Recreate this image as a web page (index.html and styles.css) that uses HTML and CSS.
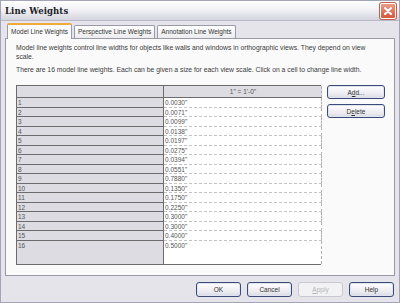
FILE: index.html
```html
<!DOCTYPE html>
<html lang="en">
<head>
    <meta charset="UTF-8">
    <title>Line Weights</title>
    <link rel="stylesheet" href="styles.css">
</head>
<body>
    <div class="window">
        <div class="titlebar">
            <span class="title">Line Weights</span>
            <span class="close">
                <svg width="14" height="14" viewBox="0 0 14 14">
                    <path d="M4 4 L10 10 M10 4 L4 10" stroke="#fff" stroke-width="2" stroke-linecap="round"/>
                </svg>
            </span>
        </div>
        <div class="content">
            <div class="tabs">
                <div class="tab active">Model Line Weights</div>
                <div class="tab">Perspective Line Weights</div>
                <div class="tab">Annotation Line Weights</div>
            </div>
            <div class="panel">
                <p class="info">Model line weights control line widths for objects like walls and windows in orthographic views. They depend on view scale.</p>
                <p class="info">There are 16 model line weights. Each can be given a size for each view scale. Click on a cell to change line width.</p>
                <div class="grid-area">
                    <div class="grid" id="grid">
                        <div class="cell head"></div>
                        <div class="cell head scale">1" = 1'-0"</div>
                    </div>
                    <div class="side-buttons">
                        <button class="btn">A<u>d</u>d...</button>
                        <button class="btn">D<u>e</u>lete</button>
                    </div>
                </div>
            </div>
            <div class="footer">
                <button class="btn">OK</button>
                <button class="btn">Cancel</button>
                <button class="btn" disabled><u>A</u>pply</button>
                <button class="btn">Help</button>
            </div>
        </div>
    </div>

    <script>
        // line weight values, one per pen number
        const weights = ["0.0030", "0.0071", "0.0099", "0.0138", "0.0197", "0.0275", "0.0394", "0.0551",
            "0.7880", "0.1350", "0.1750", "0.2250", "0.3000", "0.3000", "0.4000", "0.5000"];
        const grid = document.getElementById("grid");
        weights.forEach(function (w, i) {
            const num = document.createElement("div");
            num.className = "cell num";
            num.textContent = i + 1;
            const val = document.createElement("div");
            val.className = "cell val";
            val.textContent = w + '"';
            grid.appendChild(num);
            grid.appendChild(val);
        });
    </script>
</body>
</html>
```

FILE: styles.css
```css
body {
    margin: 0;
    font-family: "Liberation Sans", Arial, sans-serif;
    background: #9c9cb0;
}
.window {
    width: 398px;
    height: 301px;
    border: 1px solid #a4a4b8;
    background: #e4e4ea;
    display: flex;
    flex-direction: column;
}
.titlebar {
    height: 19px;
    display: flex;
    align-items: center;
    justify-content: space-between;
    padding: 0 3px 0 4px;
    background: linear-gradient(#ffffff, #f2f2f6 45%, #d4d4de);
    border-bottom: 1px solid #b8b8c8;
}
.title {
    font-family: "DejaVu Serif", "Liberation Serif", serif;
    font-weight: bold;
    font-size: 8.5px;
    color: #1c1c28;
    letter-spacing: 0.1px;
}
.close {
    width: 14px;
    height: 14px;
    border-radius: 2px;
    background: linear-gradient(#f09a84, #d4583c);
    border: 1px solid #fff;
    box-shadow: 0 0 0 1px #c06050;
    display: flex;
}
.content {
    flex: 1;
    display: flex;
    flex-direction: column;
    padding: 2px 4px 0 4px;
}
.tabs {
    display: flex;
    align-items: flex-end;
    height: 15px;
    padding-left: 2px;
}
.tab {
    font-size: 6.5px;
    color: #333;
    height: 12px;
    line-height: 12px;
    padding: 0 3px;
    margin-right: 2px;
    background: linear-gradient(#ffffff, #ececf0);
    border: 1px solid #9a9aa8;
    border-bottom: none;
    border-radius: 2px 2px 0 0;
}
.tab.active {
    height: 14px;
    line-height: 14px;
    background: #fbfbfc;
    border-top: 2px solid #f0a840;
    margin-bottom: -1px;
    position: relative;
    z-index: 1;
}
.panel {
    height: 232px;
    background: #fafafb;
    border: 1px solid #9a9aa8;
    padding: 4px 8px 0 10px;
}
.info {
    font-size: 6.8px;
    line-height: 9px;
    color: #3a3a3a;
    margin: 0 0 4px 0;
    width: 352px;
}
.grid-area {
    display: flex;
    gap: 6px;
    margin-top: 11px;
}
.grid {
    width: 305px;
    height: 180px;
    display: grid;
    grid-template-columns: 147px 158px;
    grid-template-rows: 12px repeat(15, 9.5px) 1fr;
    border-left: 1px solid #6c6c6c;
    border-top: 1px solid #6c6c6c;
    border-bottom: 1px solid #6c6c6c;
    box-sizing: border-box;
}
.cell {
    font-size: 6.5px;
    line-height: 9px;
    color: #555;
    padding-left: 1px;
    box-sizing: border-box;
    overflow: hidden;
}
.head {
    background: #dcdce2;
    border-bottom: 1px solid #6c6c6c;
    border-right: 1px solid #6c6c6c;
}
.head.scale {
    text-align: center;
    line-height: 11px;
    border-right: 1px dashed #b0b0b0;
}
.num {
    background: #dcdce2;
    border-bottom: 1px solid #6c6c6c;
    border-right: 1px solid #6c6c6c;
}
.val {
    background: #fff;
    border-bottom: 1px dashed #c4c4c4;
    border-right: 1px dashed #b0b0b0;
}
.num:nth-last-child(2), .val:last-child {
    border-bottom: none;
}
.side-buttons {
    display: flex;
    flex-direction: column;
    gap: 5px;
}
.side-buttons .btn {
    width: 58px;
    height: 14px;
}
.btn {
    font-family: "Liberation Sans", Arial, sans-serif;
    font-size: 6.5px;
    color: #333;
    padding: 0;
    height: 15px;
    width: 45px;
    background: linear-gradient(#ffffff, #eaeaf0 70%, #d8d8e2);
    border: 1px solid #3c4a78;
    border-radius: 3px;
    box-shadow: inset 0 0 0 1px #e0e4f0;
}
.btn:disabled {
    color: #b4b4b4;
    background: #f2f2f4;
    border-color: #c8c8d0;
    box-shadow: none;
}
.footer {
    display: flex;
    justify-content: flex-end;
    gap: 6px;
    padding: 6px 1px 0 0;
}
```
